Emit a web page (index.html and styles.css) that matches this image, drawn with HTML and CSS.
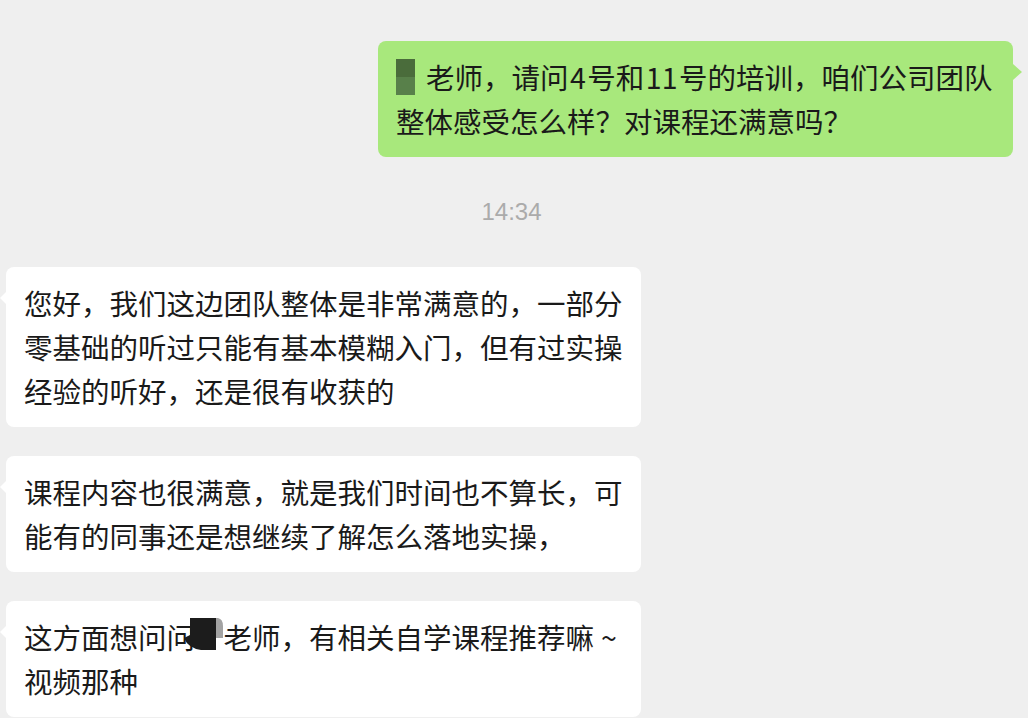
FILE: index.html
```html
<!DOCTYPE html>
<html lang="zh-CN">
<head>
<meta charset="utf-8">
<title>聊天</title>
<link rel="stylesheet" href="styles.css">
</head>
<body>
<div class="chat">
  <div class="row row-right">
    <div class="bubble bubble-me"><span class="mask"></span>老师，请问<span class="num">4</span>号和<span class="num">11</span>号的培训，咱们公司团队整体感受怎么样？对课程还满意吗？</div>
  </div>
  <div class="time">14:34</div>
  <div class="row row-left">
    <div class="bubble bubble-other">您好，我们这边团队整体是非常满意的，一部分零基础的听过只能有基本模糊入门，但有过实操经验的听好，还是很有收获的</div>
  </div>
  <div class="row row-left">
    <div class="bubble bubble-other">课程内容也很满意，就是我们时间也不算长，可能有的同事还是想继续了解怎么落地实操，</div>
  </div>
  <div class="row row-left">
    <div class="bubble bubble-other">这方面想问问<span class="redact"><svg class="blot" width="44" height="40" viewBox="0 0 44 40"><path d="M34 2 H37 Q42 3 42 10 V22 H34 Z" fill="#a3a3a3"/><path d="M9 2 H35 V34 H20 Q7 32 3 22 L9 19 Z" fill="#1c1c1c"/></svg></span>老师，有相关自学课程推荐嘛<span class="tilde">~</span>视频那种</div>
  </div>
</div>
</body>
</html>
```
FILE: styles.css
```css
html, body {
  margin: 0;
  padding: 0;
  background: #efefef;
}

body {
  width: 1028px;
  height: 718px;
  overflow: hidden;
  font-family: "Noto Sans CJK SC", "Noto Sans", sans-serif;
  color: #1a1a1a;
}

.chat {
  display: flex;
  flex-direction: column;
  padding-top: 41px;
}

.row {
  display: flex;
}

.row-right {
  justify-content: flex-end;
  padding-right: 15px;
}

.row-left {
  justify-content: flex-start;
  padding-left: 6px;
  margin-bottom: 29px;
}

.bubble {
  position: relative;
  box-sizing: border-box;
  max-width: 635px;
  padding: 14px 18px;
  border-radius: 8px;
  font-size: 28.5px;
  line-height: 44px;
  word-break: break-all;
}

.bubble-me {
  background: #a8e87c;
}

.bubble-me::after {
  content: "";
  position: absolute;
  right: -9px;
  top: 23px;
  border-left: 9px solid #a8e87c;
  border-top: 8.5px solid transparent;
  border-bottom: 8.5px solid transparent;
}

.bubble-other {
  background: #ffffff;
}

.bubble-other::before {
  content: "";
  position: absolute;
  left: -6px;
  top: 25px;
  border-right: 6px solid #ffffff;
  border-top: 6px solid transparent;
  border-bottom: 6px solid transparent;
}

.mask {
  display: inline-block;
  width: 19px;
  height: 36px;
  vertical-align: top;
  margin-top: 4px;
  margin-right: 11px;
  background: linear-gradient(#4a6c3b 0, #4a6c3b 50%, #58804a 50%, #58804a 100%);
}

.num {
  margin: 0 1.5px;
}

.tilde {
  margin-left: 7px;
}

.time {
  text-align: center;
  font-family: "Liberation Sans", "Noto Sans", sans-serif;
  font-size: 24px;
  line-height: 30px;
  color: #ababab;
  margin: 40px 0;
  padding-right: 5px;
}

.redact {
  position: relative;
  display: inline-block;
  width: 1em;
  height: 44px;
  vertical-align: top;
}

.blot {
  position: absolute;
  left: -14px;
  top: 1px;
}
```
